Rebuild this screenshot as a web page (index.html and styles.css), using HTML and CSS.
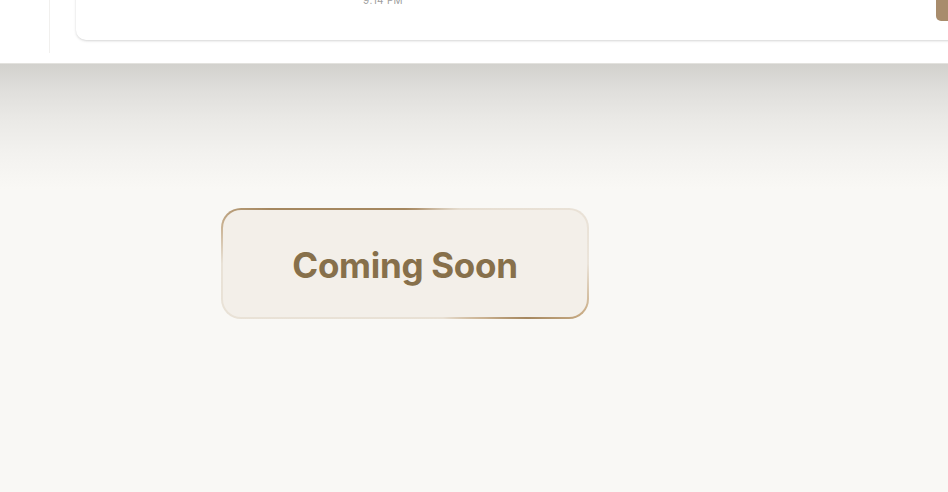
FILE: index.html
```html
<!DOCTYPE html>
<html>
<head>
<meta charset="utf-8">
<link rel="stylesheet" href="styles.css">
</head>
<body>
<div class="top">
  <div class="side"></div>
  <div class="main">
    <div class="card">
      <div class="card-body">
        <span class="time">9:14 PM</span>
        <span class="action"></span>
      </div>
    </div>
  </div>
</div>
<div class="stage">
  <div class="soon">Coming Soon</div>
</div>
</body>
</html>
```
FILE: styles.css
```css
html, body {
  margin: 0;
  padding: 0;
  background: #f9f8f5;
  font-family: Inter, "Liberation Sans", sans-serif;
}
.top {
  display: flex;
  height: 63px;
  background: #ffffff;
  border-bottom: 1px solid #e3e2de;
  overflow: hidden;
}
.side {
  width: 49px;
  height: 53px;
  border-right: 1px solid #f1f0ee;
  flex: none;
}
.main {
  flex: 1;
  padding-left: 26px;
  min-width: 0;
}
.card {
  margin-top: -40px;
  height: 80px;
  width: 1000px;
  background: #fff;
  border-radius: 10px;
  box-shadow: 0 1px 3px rgba(0,0,0,0.12), 0 1px 2px rgba(0,0,0,0.05);
}
.card-body {
  display: flex;
  align-items: flex-start;
  padding-left: 287px;
}
.time {
  margin-top: 34px;
  font-size: 10px;
  line-height: 12px;
  color: #9d9d9d;
  letter-spacing: 0.3px;
}
.action {
  margin-left: 533px;
  width: 40px;
  height: 61px;
  background: #a88c6c;
  border-radius: 5px;
}
.stage {
  height: 428px;
  background: linear-gradient(#d2d1cd 0px, #dfdedb 25px, #eae9e6 55px, #f3f2ef 90px, #f9f8f5 125px, #f9f8f5 100%);
  padding: 144px 0 0 221px;
  box-sizing: border-box;
}
.soon {
  width: 368px;
  height: 111px;
  box-sizing: border-box;
  border: 2px solid transparent;
  border-radius: 20px;
  background:
    linear-gradient(#f3efe9, #f3efe9) padding-box,
    conic-gradient(from 0deg,
      #a5875f 0deg, #b09470 12deg, #e6ddd0 45deg, #ebe4da 90deg,
      #c8ab84 106deg, #a5875f 114deg, #c9b08f 124deg, #e8e0d4 145deg,
      #e9e2d7 270deg, #c8b090 282deg, #a5875f 292deg, #a5875f 360deg) border-box;
  display: flex;
  align-items: center;
  justify-content: center;
  font-size: 35px;
  font-weight: 700;
  color: #87704b;
  letter-spacing: -0.3px;
  padding-top: 3px;
}
```
